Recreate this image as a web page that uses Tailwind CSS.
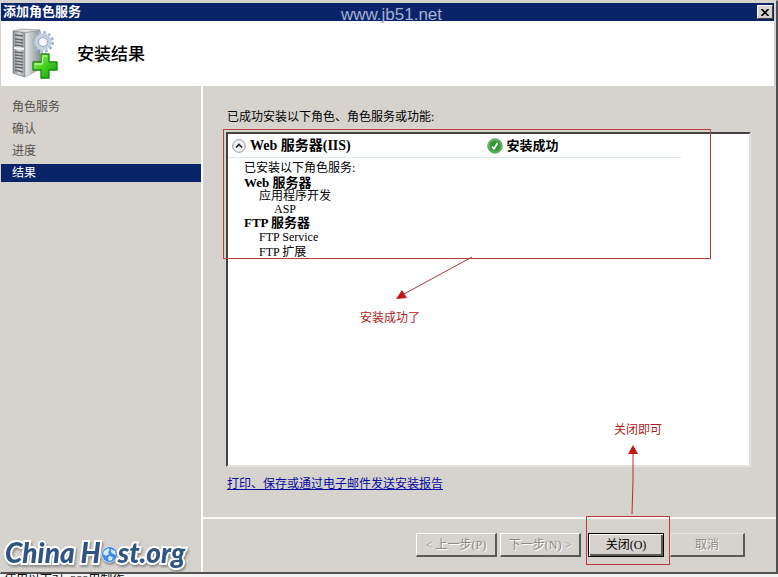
<!DOCTYPE html>
<html lang="zh-CN">
<head>
    <meta charset="UTF-8">
    <meta name="viewport" content="width=device-width, initial-scale=1.0">
    <title>添加角色服务</title>
    <script src="https://cdn.jsdelivr.net/npm/@tailwindcss/browser@4"></script>
</head>
<body class="h-screen flex flex-col overflow-hidden bg-[#f4f4f4] text-black text-[12px] leading-4 font-['Liberation_Serif','Noto_Sans_CJK_SC',serif]">
    <div class="flex-1 min-h-0 flex flex-col bg-[#d6d3ce] border-t border-l border-[#d6d3ce] border-r-2 border-r-[#505050] border-b-2 border-b-[#505050]">
        <!-- Title bar -->
        <div class="relative shrink-0 mt-[2px] mr-[2px] h-[18px] flex items-center justify-between bg-[#0a246a] pl-[2px] pr-px text-white">
            <h1 class="text-[13px] font-bold">添加角色服务</h1>
            <span class="absolute left-2 right-0 top-0 text-center text-[17px] leading-6 text-[#a3b1d2] font-['Liberation_Sans',sans-serif]">www.jb51.net</span>
            <button type="button" aria-label="关闭窗口" class="w-4 h-[14px] flex items-center justify-center bg-[#d6d3ce] border border-white border-r-[#404040] border-b-[#404040]">
                <svg width="8" height="7" viewBox="0 0 8 7" stroke="#000" stroke-width="1.6"><path d="M.5 0l7 7M7.5 0l-7 7"/></svg>
            </button>
        </div>

        <!-- Page heading -->
        <header class="shrink-0 mr-[2px] h-[65px] flex items-center gap-4 bg-white pl-2">
            <svg width="52" height="56" viewBox="0 0 52 56">
                <defs>
                    <linearGradient id="front" x1="0" x2="1"><stop offset="0" stop-color="#888c90"/><stop offset=".5" stop-color="#d4d7da"/><stop offset="1" stop-color="#9a9ea2"/></linearGradient>
                    <linearGradient id="side" x1="0" x2="1"><stop offset="0" stop-color="#eceeef"/><stop offset="1" stop-color="#8a8f93"/></linearGradient>
                    <linearGradient id="plus" x1="0" y1="0" x2="1" y2="1"><stop offset="0" stop-color="#b6f36a"/><stop offset=".5" stop-color="#43d11f"/><stop offset="1" stop-color="#169a0c"/></linearGradient>
                </defs>
                <path d="M4 5l9-2 18 1-15 3z" fill="#d9dbdd" stroke="#85898c" stroke-width=".6"/>
                <path d="M4 5l12 2v44L4 47z" fill="url(#front)" stroke="#84888b" stroke-width=".8"/>
                <path d="M16 7l15-3v39l-15 8z" fill="url(#side)" stroke="#909599" stroke-width=".6"/>
                <path d="M6 9l8 1M6 13l8 1M6 16l8 1M6 19l8 1M6 26l8 1M6 29l8 1M6 32l8 1M6 35l8 1M6 38l8 1M6 41l8 1M6 44l8 2" stroke="#63676a" stroke-width="1.3"/>
                <path d="M5 22l10 1" stroke="#f4f5f6" stroke-width="2"/>
                <circle cx="34" cy="16" r="9" fill="none" stroke="#a3b6ca" stroke-width="4" stroke-dasharray="2.6 2.11"/>
                <circle cx="34" cy="16" r="6.500" fill="#fff" stroke="#c3d1df" stroke-width="4"/>
                <circle cx="34" cy="16" r="4.500" fill="#f8fbff" stroke="#94a6b9"/>
                <path d="M32 28h8v8h8v8h-8v8h-8v-8h-8v-8h8z" fill="url(#plus)" stroke="#168a13" stroke-width="1.300" stroke-linejoin="round"/>
                <path d="M34 30h4M26 38h7.500v-7" fill="none" stroke="#d9ffb5"/>
            </svg>
            <h2 class="pt-[2px] text-[17px] font-medium">安装结果</h2>
        </header>

        <div class="flex-1 min-h-0 flex">
            <!-- Steps -->
            <aside class="w-[202px] shrink-0 flex flex-col justify-between border-r-2 border-white">
                <nav class="flex flex-col gap-1 pt-3 leading-[18px] text-[#55524e]">
                    <a href="#" class="pl-[11px]">角色服务</a>
                    <a href="#" class="pl-[11px]">确认</a>
                    <a href="#" class="pl-[11px]">进度</a>
                    <a href="#" aria-current="step" class="pl-[11px] bg-[#0a246a] text-white">结果</a>
                </nav>
                <div class="flex items-center pl-1 pb-[2px] text-[28px] leading-9 font-black italic text-[#2f5482] font-['Lato',sans-serif] [-webkit-text-stroke:4px_#fff] [paint-order:stroke_fill] drop-shadow-[1px_2px_1px_#8a8a8a]">
                    <span>China H</span>
                    <svg class="mt-1" width="17" height="17" viewBox="0 0 17 17">
                        <circle cx="8.500" cy="8.500" r="7.500" fill="#4388e6" stroke="#d4e7ff" stroke-width="1.500"/>
                        <path d="M3 5l4-3 2 2-2 2 1 2-3 2-3-2zM10 3l4 2 1 4-3-1-2-2zM8 10l4 1-1 3-3 1-1-3z" fill="#d3eaff"/>
                    </svg>
                    <span>st.org</span>
                </div>
            </aside>

            <div class="flex-1 min-w-0 flex flex-col">
                <main class="flex-1 min-h-0 flex flex-col pt-[23px] pb-[25px] pl-6 pr-6">
                    <p>已成功安装以下角色、角色服务或功能:</p>

                    <section class="relative flex-1 min-h-0 mt-[7px] mr-px -ml-px bg-white border-2 border-[#45433f] border-r-[#e4e2de] border-b-[#e4e2de]">
                        <div class="flex h-6 items-center border-b border-[#dceaea] mr-[68px] pl-[4px]">
                            <div class="w-1/2 shrink-0 flex items-center gap-1 pr-2">
                                <button type="button" aria-label="折叠" class="shrink-0">
                                    <svg width="14" height="14" viewBox="0 0 14 14" fill="none"><circle cx="7" cy="7" r="6.300" fill="#f4f4f4" stroke="#969696"/><path d="M4 8.500l3-3 3 3" stroke="#222" stroke-width="1.600"/></svg>
                                </button>
                                <h3 class="text-[14px] font-bold">Web 服务器(IIS)</h3>
                            </div>
                            <div class="flex items-center gap-1 pl-[30px]">
                                <svg width="16" height="16" viewBox="0 0 16 16" fill="none"><circle cx="8" cy="8" r="7.300" fill="#2f9835" stroke="#79a979"/><circle cx="8" cy="8" r="6.200" stroke="#8fd58a" stroke-width=".7"/><path d="M5 8.500l2 2.500 3.500-6" stroke="#fff" stroke-width="1.800"/></svg>
                                <span class="text-[13px] font-bold">安装成功</span>
                            </div>
                        </div>
                        <div class="pl-4 pt-[2px]">
                            <p>已安装以下角色服务:</p>
                            <h4 class="text-[13px] leading-[14px] font-bold">Web 服务器</h4>
                            <ul class="pl-[15px] leading-[13px]">
                                <li>应用程序开发
                                    <ul class="pl-[15px]"><li>ASP</li></ul>
                                </li>
                            </ul>
                            <h4 class="text-[13px] leading-[14px] font-bold">FTP 服务器</h4>
                            <ul class="pl-[15px] leading-[15px]">
                                <li>FTP Service</li>
                                <li>FTP 扩展</li>
                            </ul>
                        </div>

                        <!-- Red callout round the installed services -->
                        <div class="absolute -top-[5px] -left-[5px] right-[38px] h-[130px] border border-[#b5423f]"></div>
                        <svg class="absolute left-[166px] top-[122px]" width="82" height="46" viewBox="0 0 82 46"><path d="M78 1L10 38" stroke="#a83a38"/><path d="M2 43l6-9 5 8z" fill="#c01818"/></svg>
                        <span class="absolute left-[132px] top-[176px] text-[#b01c1c]">安装成功了</span>
                    </section>

                    <a href="#" class="self-start mt-[9px] text-[#0808a0] underline">打印、保存或通过电子邮件发送安装报告</a>
                </main>

                <!-- Wizard buttons -->
                <footer class="shrink-0 h-[55px] flex items-start justify-end border-t-2 border-[#f8f8f8] pt-[14px] pr-[31px] whitespace-nowrap">
                    <button type="button" disabled class="w-[81px] h-6 mr-[3px] border border-white border-r-2 border-b-2 border-r-[#5c5a57] border-b-[#5c5a57] text-[#8c8984] [text-shadow:1px_1px_0_#fff]">&lt; 上一步(P)</button>
                    <button type="button" disabled class="w-[81px] h-6 mr-[7px] border border-white border-r-2 border-b-2 border-r-[#5c5a57] border-b-[#5c5a57] text-[#8c8984] [text-shadow:1px_1px_0_#fff]">下一步(N) &gt;</button>
                    <div class="relative mr-[6px]">
                        <button type="button" class="w-[76px] h-6 border border-black shadow-[inset_1px_1px_0_#fff,inset_-2px_-2px_0_#5c5a57]">关闭(O)</button>
                        <div class="absolute -top-[17px] -left-[2px] w-[84px] h-[49px] border border-[#c0383a]"></div>
                        <svg class="absolute left-[38px] -top-[89px]" width="14" height="72" viewBox="0 0 14 72"><path d="M7 10v27l-1 33" fill="none" stroke="#c0282c"/><path d="M7 1l5 9H2z" fill="#c01818"/></svg>
                        <span class="absolute left-[26px] -top-[111px] text-[#b01c1c]">关闭即可</span>
                    </div>
                    <button type="button" disabled class="w-[75px] h-6 border border-[#e5e3df] border-r-2 border-b-2 border-r-[#5c5a57] border-b-[#5c5a57] text-[#8c8984] [text-shadow:1px_1px_0_#fff]">取消</button>
                </footer>
            </div>
        </div>
    </div>

    <!-- Top edge of the article text under the window -->
    <p class="shrink-0 h-[3px] overflow-hidden pl-1"><span class="block -mt-[2px]">使用以下对: 388用制作</span></p>
</body>
</html>
